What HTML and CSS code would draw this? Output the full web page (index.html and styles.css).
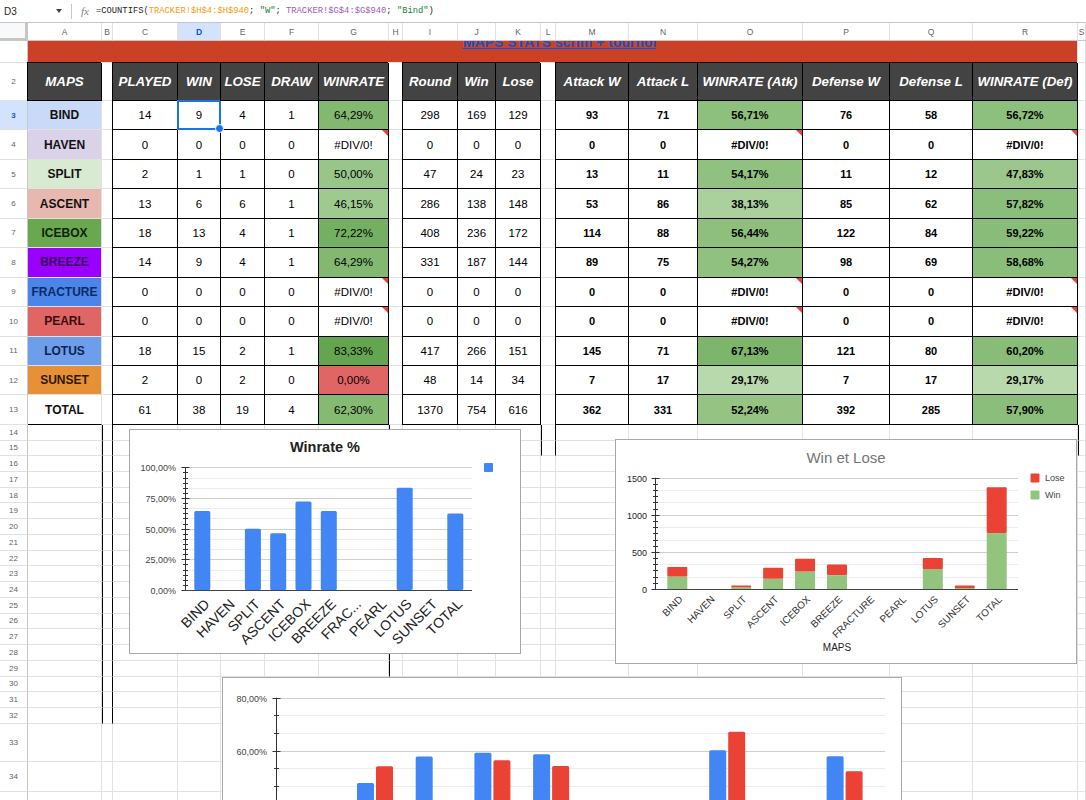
FILE: index.html
```html
<!DOCTYPE html>
<html lang="fr">
<head>
    <meta charset="UTF-8">
    <title>MAPS STATS scrim + tournoi</title>
    <link rel="stylesheet" href="styles.css">
</head>
<body>
<div class="app">
    <div class="formula-bar">
        <div class="name-box"><span>D3</span><span class="caret"></span></div>
        <div class="fx">fx</div>
        <div class="formula">=COUNTIFS(<span class="ref-h">TRACKER!$H$4:$H$940</span>; <span class="str">"W"</span>; <span class="ref-g">TRACKER!$G$4:$G$940</span>; <span class="str">"Bind"</span>)</div>
    </div>

    <div class="sheet" id="sheet"></div>

    <!-- graphiques flottants -->
    <div class="chart chart-winrate"><svg id="chart-winrate" width="390" height="223"></svg></div>
    <div class="chart chart-winlose"><svg id="chart-winlose" width="460" height="223"></svg></div>
    <div class="chart chart-sides"><svg id="chart-sides" width="678" height="298"></svg></div>
</div>

<script>
    // nom, [played, win, lose, draw, winrate], [round, win, lose], [atk W, atk L, wr atk, def W, def L, wr def]
    const maps = [
        ['BIND', [14, 9, 4, 1, 64.29], [298, 169, 129], [93, 71, 56.71, 76, 58, 56.72]],
        ['HAVEN', [0, 0, 0, 0, null], [0, 0, 0], [0, 0, null, 0, 0, null]],
        ['SPLIT', [2, 1, 1, 0, 50.00], [47, 24, 23], [13, 11, 54.17, 11, 12, 47.83]],
        ['ASCENT', [13, 6, 6, 1, 46.15], [286, 138, 148], [53, 86, 38.13, 85, 62, 57.82]],
        ['ICEBOX', [18, 13, 4, 1, 72.22], [408, 236, 172], [114, 88, 56.44, 122, 84, 59.22]],
        ['BREEZE', [14, 9, 4, 1, 64.29], [331, 187, 144], [89, 75, 54.27, 98, 69, 58.68]],
        ['FRACTURE', [0, 0, 0, 0, null], [0, 0, 0], [0, 0, null, 0, 0, null]],
        ['PEARL', [0, 0, 0, 0, null], [0, 0, 0], [0, 0, null, 0, 0, null]],
        ['LOTUS', [18, 15, 2, 1, 83.33], [417, 266, 151], [145, 71, 67.13, 121, 80, 60.20]],
        ['SUNSET', [2, 0, 2, 0, 0], [48, 14, 34], [7, 17, 29.17, 7, 17, 29.17]],
        ['TOTAL', [61, 38, 19, 4, 62.30], [1370, 754, 616], [362, 331, 52.24, 392, 285, 57.90]]
    ];

    const headers = {
        0: 'MAPS', 2: 'PLAYED', 3: 'WIN', 4: 'LOSE', 5: 'DRAW', 6: 'WINRATE',
        8: 'Round', 9: 'Win', 10: 'Lose',
        12: 'Attack W', 13: 'Attack L', 14: 'WINRATE (Atk)', 15: 'Defense W', 16: 'Defense L', 17: 'WINRATE (Def)'
    };

    const sheet = document.getElementById('sheet');
    const letters = 'ABCDEFGHIJKLMNOPQRS';

    function add(cls, text) {
        const d = document.createElement('div');
        d.className = 'cell' + (cls ? ' ' + cls : '');
        if (text != null) d.textContent = text;
        sheet.appendChild(d);
        return d;
    }

    const pct = v => v.toFixed(2).replace('.', ',') + '%';

    // echelle de couleur : vert clair -> vert fonce, rouge pour 0
    function heat(v) {
        if (v === 0) return '#e06666';
        const lo = [198, 226, 187], hi = [90, 159, 68];
        const t = Math.min(1, Math.max(0, (v - 20) / 70));
        return 'rgb(' + lo.map((c, i) => Math.round(c + (hi[i] - c) * t)).join(',') + ')';
    }

    function bodyCell(r, c) {
        if (r === 2) {
            return c in headers ? add('tb hd', headers[c]) : add();
        }
        if (r <= 13) {
            const m = maps[r - 3];
            if (c === 0) return add('map ' + m[0].toLowerCase(), m[0]);
            let group = null, i = 0;
            if (c >= 2 && c <= 6) { group = m[1]; i = c - 2; }
            else if (c >= 8 && c <= 10) { group = m[2]; i = c - 8; }
            else if (c >= 12 && c <= 17) { group = m[3]; i = c - 12; }
            if (!group) return add();
            let cls = 'tb' + (c >= 12 ? ' strong' : '');
            if (r === 3 && c === 3) cls += ' sel';
            const v = group[i];
            if (c === 6 || c === 14 || c === 17) {
                if (v === null) return add(cls + ' err', '#DIV/0!');
                const d = add(cls, pct(v));
                d.style.background = heat(v);
                return d;
            }
            return add(cls, v);
        }
        // bordures qui continuent sous les tableaux
        if (c === 1 && r <= 32) return add('edge-l edge-r');
        if (c === 7 && r <= 29) return add('edge-l');
        if (c === 11 && r <= 15) return add('edge-l edge-r');
        if (c === 18 && r <= 15) return add('edge-l');
        return add();
    }

    add('corner');
    for (const l of letters) add('ch' + (l === 'D' ? ' on' : ''), l);

    add('rh r1').innerHTML = '<span>1</span>';
    add('banner').innerHTML = '<span class="link">MAPS STATS scrim + tournoi</span>';
    add();

    for (let r = 2; r <= 35; r++) {
        add('rh' + (r === 3 ? ' on' : ''), r);
        for (let c = 0; c < letters.length; c++) bodyCell(r, c);
    }

    /* ---------- graphiques ---------- */
    const NS = 'http://www.w3.org/2000/svg';

    function draw(parent, tag, attrs, text) {
        const e = document.createElementNS(NS, tag);
        for (const k in attrs) e.setAttribute(k, attrs[k]);
        if (text != null) e.textContent = text;
        parent.appendChild(e);
        return e;
    }

    function yAxis(svg, a) {
        const steps = a.max / a.major * a.ticks;
        for (let k = 0; k <= steps; k++) {
            const v = k * a.major / a.ticks;
            const y = Math.round(a.y0 - v * a.ppu) + 0.5;
            const major = k % a.ticks === 0;
            const grid = k % (a.ticks / a.grid) === 0;
            if (grid && k > 0) {
                draw(svg, 'line', { x1: a.x, x2: a.x2, y1: y, y2: y, stroke: major ? '#cfcfcf' : '#ececec' });
            }
            draw(svg, 'line', { x1: a.x - (major ? 4 : 2.5), x2: a.x + (major ? 4 : 2.5), y1: y, y2: y, stroke: '#333' });
            if (major) draw(svg, 'text', { x: a.labelX, y: y + 3, 'text-anchor': 'end', class: a.labelClass || 'ylab' }, a.fmt(v));
        }
        draw(svg, 'line', { x1: a.x, x2: a.x, y1: a.y0 - a.max * a.ppu, y2: a.y0, stroke: '#333' });
        draw(svg, 'line', { x1: a.x, x2: a.x2, y1: a.y0 + 0.5, y2: a.y0 + 0.5, stroke: '#444' });
    }

    function xLabel(svg, x, y, text, cls) {
        draw(svg, 'text', { transform: 'translate(' + x + ' ' + y + ') rotate(-45)', 'text-anchor': 'end', class: cls }, text);
    }

    // Winrate %
    (function () {
        const svg = document.getElementById('chart-winrate');
        const y0 = 160, ppu = 122.7 / 100;
        draw(svg, 'text', { x: 195, y: 22, 'text-anchor': 'middle', class: 'title' }, 'Winrate %');
        yAxis(svg, { x: 55.5, x2: 342, y0, ppu, max: 100, major: 25, ticks: 6, grid: 3, labelX: 46, fmt: pct });
        maps.forEach((m, i) => {
            const c = 72.3 + 25.3 * i;
            const v = m[1][4];
            if (v) draw(svg, 'rect', { x: c - 8, y: y0 - v * ppu, width: 16, height: v * ppu, rx: 1.5, fill: '#4285f4' });
            xLabel(svg, c + 8, 175, m[0] === 'FRACTURE' ? 'FRAC...' : m[0], 'xlab');
        });
        draw(svg, 'rect', { x: 354, y: 33, width: 9, height: 9, rx: 1, fill: '#4285f4' });
    })();

    // Win et Lose
    (function () {
        const svg = document.getElementById('chart-winlose');
        const y0 = 149, ppu = 111.3 / 1500;
        draw(svg, 'text', { x: 230, y: 23, 'text-anchor': 'middle', class: 'title-light' }, 'Win et Lose');
        yAxis(svg, { x: 39.5, x2: 402, y0, ppu, max: 1500, major: 500, ticks: 6, grid: 3, labelX: 31, labelClass: 'ylab dark', fmt: String });
        maps.forEach((m, i) => {
            const c = 61.3 + 31.94 * i;
            const win = m[2][1] * ppu, lose = m[2][2] * ppu;
            if (win) draw(svg, 'rect', { x: c - 10, y: y0 - win, width: 20, height: win, fill: '#93c47d' });
            if (lose) draw(svg, 'rect', { x: c - 10, y: y0 - win - lose, width: 20, height: lose, rx: 1, fill: '#ea4335' });
            xLabel(svg, c + 6, 160, m[0], 'xlab-small');
        });
        draw(svg, 'rect', { x: 414.5, y: 33.5, width: 9, height: 9, rx: 1, fill: '#ea4335' });
        draw(svg, 'text', { x: 429, y: 41, class: 'legend' }, 'Lose');
        draw(svg, 'rect', { x: 414.5, y: 50.5, width: 9, height: 9, rx: 1, fill: '#93c47d' });
        draw(svg, 'text', { x: 429, y: 58, class: 'legend' }, 'Win');
        draw(svg, 'text', { x: 221, y: 211, 'text-anchor': 'middle', class: 'axis-title' }, 'MAPS');
    })();

    // Winrate attaque / defense (sans BIND)
    (function () {
        const svg = document.getElementById('chart-sides');
        const ppu = 2.65, y0 = 72.7 + 60 * ppu;
        yAxis(svg, { x: 53.5, x2: 662, y0, ppu, max: 80, major: 20, ticks: 3, grid: 3, labelX: 44, fmt: pct });
        maps.slice(1).forEach((m, i) => {
            const c = 93.3 + 58.7 * i;
            const def = m[3][5], atk = m[3][2];
            if (def) draw(svg, 'rect', { x: c - 18, y: y0 - def * ppu, width: 17, height: def * ppu, rx: 1.5, fill: '#4285f4' });
            if (atk) draw(svg, 'rect', { x: c + 1, y: y0 - atk * ppu, width: 17, height: atk * ppu, rx: 1.5, fill: '#ea4335' });
        });
    })();
</script>
</body>
</html>
```

FILE: styles.css
```css
* {
    box-sizing: border-box;
}

body {
    margin: 0;
    background: #fff;
    font-family: "Liberation Sans", Arial, sans-serif;
    color: #000;
}

.app {
    position: relative;
    width: 1086px;
    height: 800px;
    overflow: hidden;
}

/* barre de formule */
.formula-bar {
    display: flex;
    align-items: center;
    height: 23px;
    border-bottom: 1px solid #c7c7c7;
}

.name-box {
    width: 72px;
    height: 15px;
    display: flex;
    align-items: center;
    justify-content: space-between;
    padding: 0 9px 0 4px;
    font-size: 10px;
    color: #1f1f1f;
    border-right: 1px solid #c7c7c7;
}

.caret {
    width: 0;
    height: 0;
    border-left: 3.5px solid transparent;
    border-right: 3.5px solid transparent;
    border-top: 4px solid #444;
}

.fx {
    margin: 0 7px 0 9px;
    font: italic 11px "Liberation Serif", serif;
    color: #80868b;
}

.formula {
    font: 8.8px "Liberation Mono", monospace;
    color: #1f1f1f;
    white-space: pre;
}

.ref-h { color: #f09d0c; }
.ref-g { color: #9a5cb4; }
.str { color: #188038; }

/* grille */
.sheet {
    display: grid;
    grid-template-columns: 28px 74px 11px 65px 43px 44px 54px 70px 14px 55px 38px 45px 15px 73px 69px 105px 87px 83px 105px 8px;
    grid-template-rows: 18px 22px 38px repeat(11, 29.45px) repeat(19, 15.74px) 38px 30px 30px;
}

.cell {
    display: flex;
    align-items: center;
    justify-content: center;
    overflow: hidden;
    white-space: nowrap;
    font-size: 11.5px;
    border-right: 1px solid #e1e1e1;
    border-bottom: 1px solid #e1e1e1;
}

.corner {
    background: #f8f9fa;
    border-right: 3px solid #c4c7c5;
    border-bottom: 3px solid #c4c7c5;
}

.ch {
    font-size: 8.5px;
    color: #5f6368;
    border-bottom-color: #c7c7c7;
}

.rh {
    font-size: 8px;
    color: #5f6368;
    border-right-color: #c7c7c7;
}

.ch.on,
.rh.on {
    background: #d3e3fd;
    color: #0b57d0;
    font-weight: bold;
}

.rh.r1 {
    align-items: flex-start;
}

.rh.r1 span {
    margin-top: -7px;
}

.banner {
    grid-column: span 18;
    background: #cc4125;
    align-items: flex-start;
    padding-left: 14px;
}

.banner .link {
    margin-top: -7px;
    line-height: 16px;
    font-size: 14px;
    font-weight: bold;
    color: #1155cc;
    text-decoration: underline;
}

/* tableaux */
.tb {
    border-right-color: #000;
    border-bottom-color: #000;
    box-shadow: -1px -1px 0 #000, -1px 0 0 #000;
}

.hd {
    background: #434343;
    color: #fff;
    font-weight: bold;
    font-style: italic;
    font-size: 13.3px;
}

.strong {
    font-weight: bold;
    font-size: 11px;
}

.map {
    font-weight: bold;
    font-size: 12px;
    color: #111;
}

.bind { background: #c9daf8; }
.haven { background: #d9d2e9; }
.split { background: #d9ead3; }
.ascent { background: #e6b8af; }
.icebox { background: #6aa84f; color: #0f2409; }
.breeze { background: #9900ff; color: #3a0a5e; }
.fracture { background: #4a86e8; color: #0b2a66; }
.pearl { background: #e06666; color: #3a0d0d; }
.lotus { background: #6d9eeb; color: #0d2350; }
.sunset { background: #e69138; color: #2e1700; }
.total { background: #fff; border-bottom-color: #000; }

.err {
    position: relative;
}

.err::before {
    content: '';
    position: absolute;
    top: 0;
    right: 0;
    border-top: 6px solid #ea4335;
    border-left: 6px solid transparent;
}

.sel {
    position: relative;
    z-index: 2;
    overflow: visible;
    border-right-color: #1a73e8;
    border-bottom-color: #1a73e8;
    box-shadow: -1px -1px 0 #1a73e8, -1px 0 0 #1a73e8, inset 0 0 0 1px #1a73e8;
}

.sel::after {
    content: '';
    position: absolute;
    right: -4px;
    bottom: -4px;
    width: 7px;
    height: 7px;
    border-radius: 50%;
    background: #1a73e8;
    border: 1px solid #fff;
}

.edge-l { border-left: 1px solid #000; }
.edge-r { border-right-color: #000; }

/* graphiques */
.chart {
    position: absolute;
    background: #fff;
    border: 1px solid #a8a8a8;
}

.chart svg {
    display: block;
}

.chart-winrate { left: 129px; top: 429px; width: 392px; height: 225px; }
.chart-winlose { left: 615px; top: 439px; width: 462px; height: 225px; }
.chart-sides { left: 222px; top: 677px; width: 680px; height: 300px; }

.chart text { font-family: "Liberation Sans", Arial, sans-serif; }
.chart .title { font-size: 14.5px; font-weight: bold; fill: #202020; }
.chart .title-light { font-size: 15px; fill: #757575; }
.chart .ylab { font-size: 9px; fill: #444; }
.chart .ylab.dark { fill: #222; }
.chart .xlab { font-size: 14px; fill: #222; }
.chart .xlab-small { font-size: 10px; fill: #333; }
.chart .legend { font-size: 9px; fill: #444; }
.chart .axis-title { font-size: 10px; fill: #222; }
```
